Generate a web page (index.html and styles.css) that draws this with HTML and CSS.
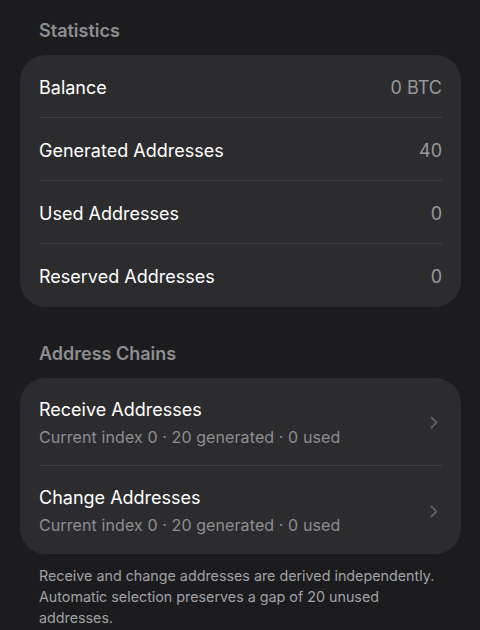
FILE: index.html
```html
<!DOCTYPE html>
<html lang="en">
<head>
    <meta charset="UTF-8">
    <meta name="viewport" content="width=device-width, initial-scale=1.0">
    <title>Wallet Statistics</title>
    <link rel="stylesheet" href="styles.css">
</head>
<body>
    <div class="page">
        <h2 class="section-title">Statistics</h2>
        <div class="group">
            <div class="row">
                <span class="label">Balance</span>
                <span class="value">0 BTC</span>
            </div>
            <div class="row">
                <span class="label">Generated Addresses</span>
                <span class="value">40</span>
            </div>
            <div class="row">
                <span class="label">Used Addresses</span>
                <span class="value">0</span>
            </div>
            <div class="row">
                <span class="label">Reserved Addresses</span>
                <span class="value">0</span>
            </div>
        </div>

        <h2 class="section-title">Address Chains</h2>
        <div class="group">
            <a class="row link-row" href="#">
                <div class="row-text">
                    <span class="label">Receive Addresses</span>
                    <span class="subtitle">Current index 0 · 20 generated · 0 used</span>
                </div>
                <svg class="chevron" width="8" height="13" viewBox="0 0 8 13">
                    <path d="M1.5 1.5 L6.5 6.5 L1.5 11.5" fill="none" stroke="currentColor" stroke-width="2" stroke-linecap="round" stroke-linejoin="round"/>
                </svg>
            </a>
            <a class="row link-row" href="#">
                <div class="row-text">
                    <span class="label">Change Addresses</span>
                    <span class="subtitle">Current index 0 · 20 generated · 0 used</span>
                </div>
                <svg class="chevron" width="8" height="13" viewBox="0 0 8 13">
                    <path d="M1.5 1.5 L6.5 6.5 L1.5 11.5" fill="none" stroke="currentColor" stroke-width="2" stroke-linecap="round" stroke-linejoin="round"/>
                </svg>
            </a>
        </div>
        <p class="footnote">Receive and change addresses are derived independently. Automatic selection preserves a gap of 20 unused addresses.</p>
    </div>
</body>
</html>
```

FILE: styles.css
```css
body {
    font-family: Inter, "Noto Sans", sans-serif;
    margin: 0;
    padding: 0;
    background-color: #1c1c1e;
    color: #fff;
}

.page {
    padding: 19px 19px 0 20px;
}

.section-title {
    font-size: 18px;
    font-weight: 600;
    color: #8d8d92;
    margin: 0 0 12px 19px;
    line-height: 24px;
}

.group {
    background-color: #2c2c2e;
    border-radius: 26px;
    padding: 0 19px;
    margin-bottom: 35px;
}

.row {
    box-sizing: border-box;
    display: flex;
    align-items: center;
    justify-content: space-between;
    height: 63px;
    padding-top: 2px;
    border-bottom: 1px solid #3d3d40;
    font-size: 18px;
    text-decoration: none;
    color: #fff;
}

.row:last-child {
    border-bottom: none;
}

.label {
    color: #fff;
}

.value {
    color: #98989e;
}

.link-row {
    height: 88px;
}

.row-text {
    display: flex;
    flex-direction: column;
    gap: 7px;
}

.subtitle {
    font-size: 16px;
    letter-spacing: 0.1px;
    color: #8e8e93;
}

.chevron {
    color: #5c5c60;
    margin-right: 4px;
}

.footnote {
    margin: -24px 20px 0 19px;
    font-size: 14.3px;
    line-height: 21px;
    color: #a1a1a6;
}
```
